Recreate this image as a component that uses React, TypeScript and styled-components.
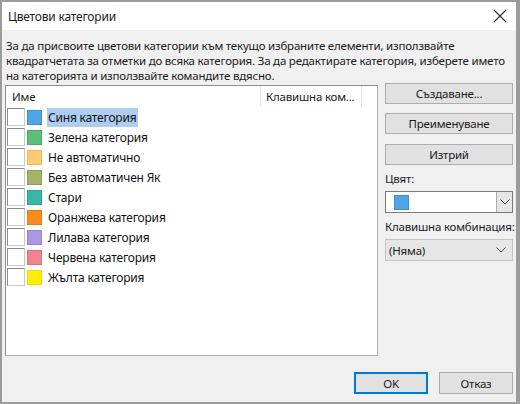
import styled, { createGlobalStyle } from "styled-components";

const GlobalStyle = createGlobalStyle`
  html, body {
    margin: 0;
    padding: 0;
    background: #ffffff;
  }
  body {
    font-family: "Noto Sans", "Open Sans", sans-serif;
    font-size: 11.5px;
    letter-spacing: -0.2px;
    color: #1a1a1a;
  }
  * {
    box-sizing: border-box;
  }
`;

const categories = [
  { name: "Синя категория", color: "#4fa5e6", edge: "#3f8fd0", selected: true },
  { name: "Зелена категория", color: "#5dbe79", edge: "#4aa965" },
  { name: "Не автоматично", color: "#fecb72", edge: "#f0b860" },
  { name: "Без автоматичен Як", color: "#a3b36a", edge: "#8f9f58" },
  { name: "Стари", color: "#38b6a7", edge: "#2aa294" },
  { name: "Оранжева категория", color: "#ff8a1e", edge: "#f07a10" },
  { name: "Лилава категория", color: "#a998e0", edge: "#9684d2" },
  { name: "Червена категория", color: "#f0838f", edge: "#e2707c" },
  { name: "Жълта категория", color: "#ffee00", edge: "#f0dc00" },
];

const descriptionLines = [
  "За да присвоите цветови категории към текущо избраните елементи, използвайте",
  "квадратчетата за отметки до всяка категория. За да редактирате категория, изберете името",
  "на категорията и използвайте командите вдясно.",
];

export default function App() {
  return (
    <>
      <GlobalStyle />
      <Dialog>
        <TitleBar>
          <Title>Цветови категории</Title>
          <CloseButton>
            <svg width="14" height="14" viewBox="0 0 14 14">
              <path d="M1 1 L13 13 M13 1 L1 13" stroke="#2b2b2b" strokeWidth="1.1" fill="none" />
            </svg>
          </CloseButton>
        </TitleBar>

        <Body>
          <Description>
            {descriptionLines.map((line) => (
              <DescriptionLine key={line}>{line}</DescriptionLine>
            ))}
          </Description>

          <MainRow>
            <ListBox>
              <ListHeader>
                <HeaderCell $width={253}>Име</HeaderCell>
                <HeaderCell $width={102} $divider>Клавишна ком...</HeaderCell>
              </ListHeader>
              {categories.map((c) => (
                <ListRow key={c.name}>
                  <CheckBox />
                  <Swatch $color={c.color} $edge={c.edge} />
                  <ItemName $selected={c.selected}>{c.name}</ItemName>
                </ListRow>
              ))}
            </ListBox>

            <Side>
              <Button $gap={0}>Създаване...</Button>
              <Button $gap={9}>Преименуване</Button>
              <Button $gap={10}>Изтрий</Button>
              <FieldLabel>Цвят:</FieldLabel>
              <ColorCombo>
                <ComboValue>
                  <Swatch $color="#4fa5e6" $edge="#3f8fd0" />
                </ComboValue>
                <ComboArrow>
                  <Chevron />
                </ComboArrow>
              </ColorCombo>
              <FieldLabel>Клавишна комбинация:</FieldLabel>
              <ShortcutCombo>
                <span>(Няма)</span>
                <Chevron />
              </ShortcutCombo>
            </Side>
          </MainRow>

          <Footer>
            <FooterButton $primary>OK</FooterButton>
            <FooterButton>Отказ</FooterButton>
          </Footer>
        </Body>
      </Dialog>
    </>
  );
}

function Chevron() {
  return (
    <svg width="10" height="6" viewBox="0 0 10 6">
      <path d="M0.5 0.5 L5 5 L9.5 0.5" stroke="#404040" strokeWidth="1" fill="none" />
    </svg>
  );
}

const Dialog = styled.div`
  width: 520px;
  height: 404px;
  display: flex;
  flex-direction: column;
  border-style: solid;
  border-color: #9c9c9c;
  border-width: 2px 4px 2px 2px;
  background: #f0f0f0;
  overflow: hidden;
`;

const TitleBar = styled.div`
  height: 28px;
  flex: none;
  background: #ffffff;
  display: flex;
  align-items: center;
  justify-content: space-between;
  padding: 0 9px 0 6px;
`;

const Title = styled.div`
  font-size: 12px;
  color: #1a1a1a;
`;

const CloseButton = styled.div`
  display: flex;
  align-items: center;
  justify-content: center;
  width: 14px;
  height: 14px;
`;

const Body = styled.div`
  flex: 1;
  display: flex;
  flex-direction: column;
  padding: 8px 3px 8px 3px;
`;

const Description = styled.div`
  padding-left: 1px;
  color: #1a1a1a;
`;

const DescriptionLine = styled.div`
  height: 15px;
  line-height: 15px;
  white-space: nowrap;
`;

const MainRow = styled.div`
  display: flex;
  gap: 7px;
`;

const ListBox = styled.div`
  width: 373px;
  height: 271px;
  margin-top: 2px;
  background: #ffffff;
  border: 1px solid #adadad;
  border-top-color: #8c8c8c;
  border-left-color: #8c8c8c;
  padding: 0 0 0 1px;
`;

const ListHeader = styled.div`
  height: 21px;
  display: flex;
`;

const HeaderCell = styled.div<{ $width: number; $divider?: boolean }>`
  width: ${(p) => p.$width}px;
  display: flex;
  align-items: center;
  padding-left: ${(p) => (p.$divider ? 5 : 5)}px;
  border-left: ${(p) => (p.$divider ? "1px solid #e5e5e5" : "none")};
  border-right: ${(p) => (p.$divider ? "1px solid #e5e5e5" : "none")};
  color: #1a1a1a;
  white-space: nowrap;
  overflow: hidden;
`;

const ListRow = styled.div`
  height: 20px;
  display: flex;
  align-items: center;
`;

const CheckBox = styled.div`
  width: 18px;
  height: 18px;
  border: 1px solid #8a8a8a;
  border-right-color: #c8c8c8;
  border-bottom-color: #c8c8c8;
  background: #ffffff;
`;

const Swatch = styled.div<{ $color: string; $edge: string }>`
  width: 15px;
  height: 15px;
  margin-left: 2px;
  background: ${(p) => p.$color};
  border: 1px solid ${(p) => p.$edge};
`;

const ItemName = styled.div<{ $selected?: boolean }>`
  margin-left: 5px;
  height: 19px;
  display: flex;
  align-items: center;
  padding: 0 2px 0 1px;
  background: ${(p) => (p.$selected ? "#aecdf0" : "transparent")};
  font-size: 12px;
  color: #111111;
`;

const Side = styled.div`
  width: 128px;
  display: flex;
  flex-direction: column;
`;

const Button = styled.div<{ $gap: number }>`
  height: 21px;
  margin-top: ${(p) => p.$gap}px;
  display: flex;
  align-items: center;
  justify-content: center;
  background: #e1e1e1;
  border: 1px solid #adadad;
  color: #1a1a1a;
`;

const FieldLabel = styled.div`
  height: 14px;
  margin-top: 6px;
  margin-bottom: 6px;
  display: flex;
  align-items: center;
  color: #1a1a2a;
  white-space: nowrap;
`;

const ColorCombo = styled.div`
  height: 22px;
  display: flex;
  background: #ffffff;
  border: 1px solid #7a7a7a;
`;

const ComboValue = styled.div`
  flex: 1;
  display: flex;
  align-items: center;
  padding-left: 6px;
`;

const ComboArrow = styled.div`
  width: 16px;
  display: flex;
  align-items: center;
  justify-content: center;
  background: #e5e5e5;
  border-left: 1px solid #adadad;
`;

const ShortcutCombo = styled.div`
  height: 22px;
  display: flex;
  align-items: center;
  justify-content: space-between;
  padding: 0 6px 0 3px;
  background: #e6e6e6;
  border: 1px solid #c4c4c4;
  color: #1a1a1a;
`;

const Footer = styled.div`
  margin-top: auto;
  display: flex;
  justify-content: flex-end;
  gap: 11px;
`;

const FooterButton = styled.div<{ $primary?: boolean }>`
  width: 74px;
  height: 22px;
  display: flex;
  align-items: center;
  justify-content: center;
  background: #e1e1e1;
  border: ${(p) => (p.$primary ? "2px solid #0078d7" : "1px solid #adadad")};
  color: #1a1a1a;
`;
